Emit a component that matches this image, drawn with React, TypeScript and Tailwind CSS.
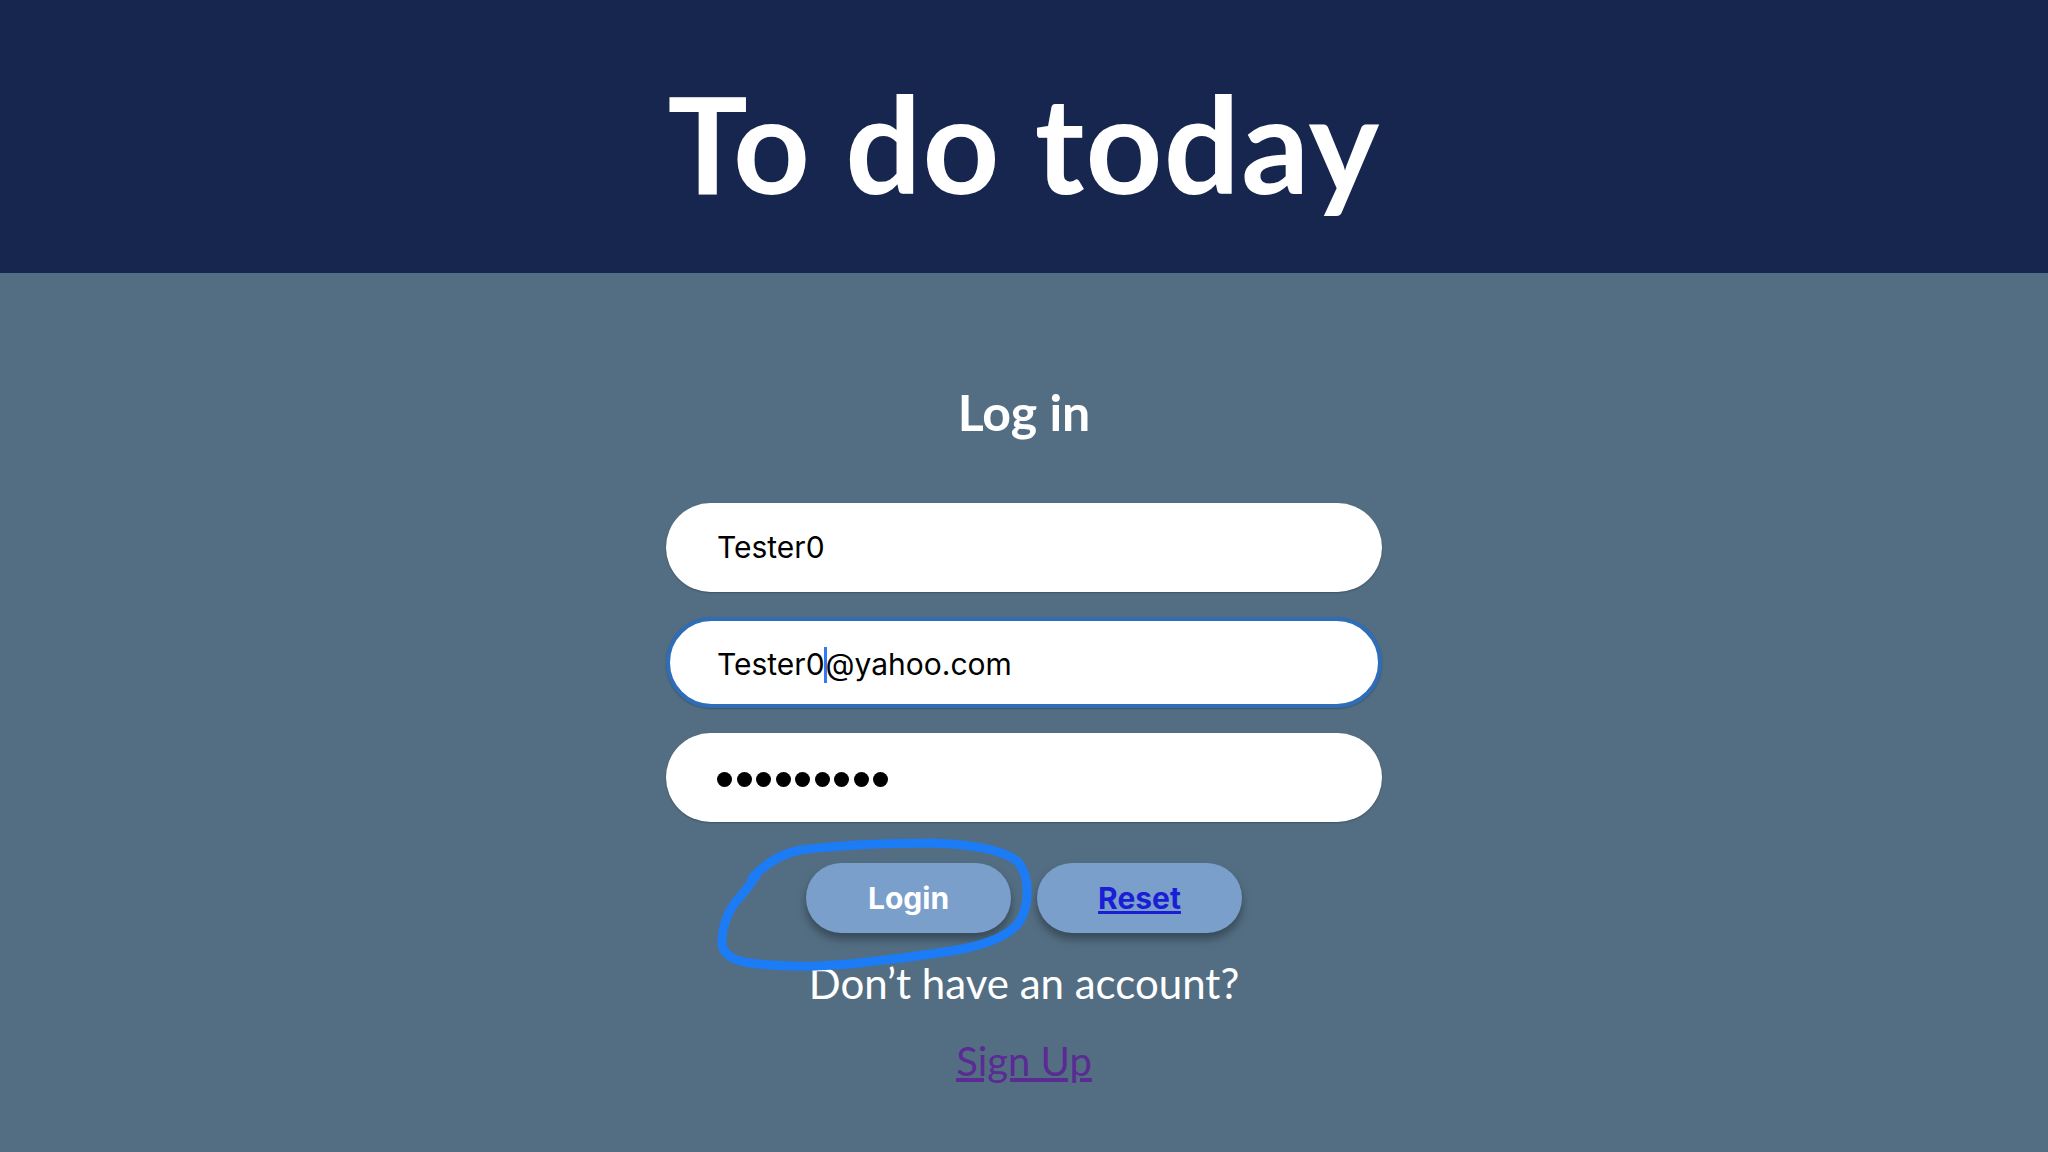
import React from 'react';

const heading = { fontFamily: 'Lato, "Noto Sans", sans-serif' };
const system = { fontFamily: 'Inter, Roboto, "Liberation Sans", sans-serif' };

function Field({ children, focused = false }: { children: React.ReactNode; focused?: boolean }) {
  return (
    <div
      className={`w-[716px] rounded-full bg-white flex items-center text-[30px] text-black shadow-[0_1px_2px_rgba(0,0,0,0.25)] ${
        focused ? 'h-[91px] border-[4px] border-[#2f6db6] pl-[47px]' : 'h-[89px] pl-[51px]'
      }`}
      style={system}
    >
      {children}
    </div>
  );
}

export default function App() {
  return (
    <div className="relative min-h-[1152px] w-full bg-[#536e83]">
      {/* Header */}
      <header className="h-[273px] bg-[#16264f] flex items-center justify-center pt-[12px]">
        <h1 className="text-[134px] leading-none font-bold text-white tracking-[0.01em]" style={heading}>
          To do today
        </h1>
      </header>

      {/* Login form */}
      <main className="flex flex-col items-center">
        <h2 className="mt-[114px] text-[50px] leading-none font-bold text-white" style={heading}>
          Log in
        </h2>

        <div className="mt-[66px] flex flex-col gap-[25px]">
          <Field>Tester0</Field>
          <Field focused>
            <span className="translate-y-[2px]">Tester0</span>
            <span className="inline-block w-[3px] h-[36px] bg-[#3478f6] -mx-[1px] translate-y-[2px]" />
            <span className="translate-y-[2px]">@yahoo.com</span>
          </Field>
          <Field>
            <div className="flex gap-[4.5px] translate-y-[2px]">
              {Array.from({ length: 9 }).map((_, i) => (
                <span key={i} className="w-[15px] h-[15px] rounded-full bg-black" />
              ))}
            </div>
          </Field>
        </div>

        <div className="mt-[41px] flex gap-[26px]" style={system}>
          <button className="w-[205px] h-[70px] rounded-full bg-[#7a9fcb] text-white text-[30px] font-bold shadow-[0_6px_10px_rgba(0,0,0,0.35)]">
            Login
          </button>
          <button className="w-[205px] h-[70px] rounded-full bg-[#7a9fcb] text-[#1a1fd6] text-[30px] font-bold underline shadow-[0_6px_10px_rgba(0,0,0,0.35)]">
            Reset
          </button>
        </div>

        <p className="mt-[29px] text-[42px] leading-none text-white" style={heading}>
          Don’t have an account?
        </p>
        <a href="#" className="mt-[37px] text-[40px] leading-none text-[#5a2b93] underline" style={heading}>
          Sign Up
        </a>
      </main>

      {/* Hand-drawn annotation */}
      <svg
        className="absolute inset-0 pointer-events-none"
        width="2048"
        height="1152"
        viewBox="0 0 2048 1152"
        fill="none"
      >
        <path
          d="M752 878 C765 864 780 854 800 850 C840 845 890 843 933 843 C970 844 1005 850 1018 862 C1030 877 1029 902 1022 917 C1015 932 995 942 967 948 C940 954 900 958 860 963 C820 967 780 967 750 963 C730 960 722 952 722 942 C722 924 730 907 740 897 C746 890 752 882 757 874"
          stroke="#1b7cf6"
          strokeWidth="9"
          strokeLinecap="round"
          strokeLinejoin="round"
        />
      </svg>
    </div>
  );
}
